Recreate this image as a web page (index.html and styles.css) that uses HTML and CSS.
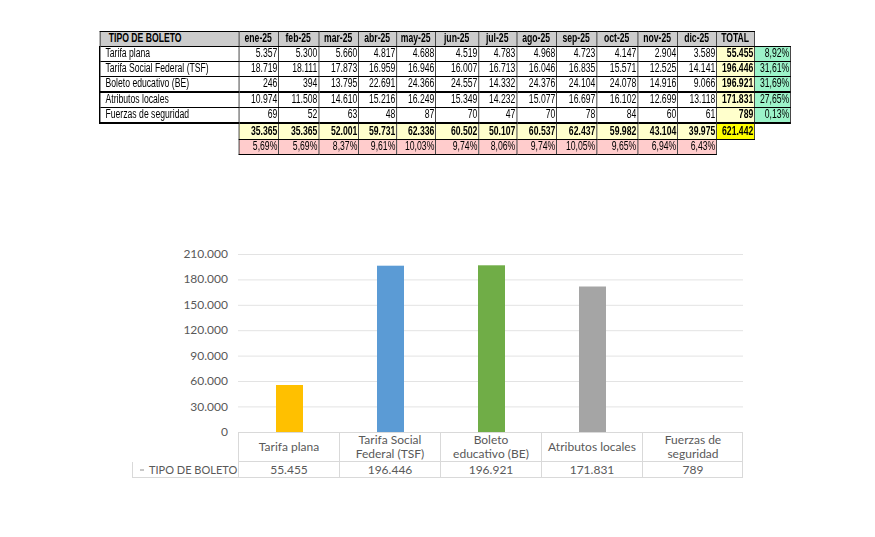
FILE: index.html
```html
<!DOCTYPE html>
<html lang="es">
<head>
<meta charset="utf-8">
<title>Tipo de boleto 2025</title>
<link rel="stylesheet" href="styles.css">
</head>
<body>
<div class="sheet">
  <table class="boletos">
    <colgroup>
      <col class="w139"><col class="w40"><col class="w40"><col class="w40"><col class="w38"><col class="w39"><col class="w43"><col class="w38"><col class="w40"><col class="w40"><col class="w41"><col class="w40"><col class="w39"><col class="w38"><col class="w36">
    </colgroup>
    <tr class="head">
      <th class="name">TIPO DE BOLETO</th>
      <th>ene-25</th><th>feb-25</th><th>mar-25</th><th>abr-25</th><th>may-25</th><th>jun-25</th><th>jul-25</th><th>ago-25</th><th>sep-25</th><th>oct-25</th><th>nov-25</th><th>dic-25</th><th>TOTAL</th><td class="blank"></td>
    </tr>
    <tr>
      <td class="name">Tarifa plana</td>
      <td>5.357</td><td>5.300</td><td>5.660</td><td>4.817</td><td>4.688</td><td>4.519</td><td>4.783</td><td>4.968</td><td>4.723</td><td>4.147</td><td>2.904</td><td>3.589</td><td class="tot">55.455</td><td class="share">8,92%</td>
    </tr>
    <tr>
      <td class="name">Tarifa Social Federal (TSF)</td>
      <td>18.719</td><td>18.111</td><td>17.873</td><td>16.959</td><td>16.946</td><td>16.007</td><td>16.713</td><td>16.046</td><td>16.835</td><td>15.571</td><td>12.525</td><td>14.141</td><td class="tot">196.446</td><td class="share">31,61%</td>
    </tr>
    <tr class="thick">
      <td class="name">Boleto educativo (BE)</td>
      <td>246</td><td>394</td><td>13.795</td><td>22.691</td><td>24.366</td><td>24.557</td><td>14.332</td><td>24.376</td><td>24.104</td><td>24.078</td><td>14.916</td><td>9.066</td><td class="tot">196.921</td><td class="share">31,69%</td>
    </tr>
    <tr>
      <td class="name">Atributos locales</td>
      <td>10.974</td><td>11.508</td><td>14.610</td><td>15.216</td><td>16.249</td><td>15.349</td><td>14.232</td><td>15.077</td><td>16.697</td><td>16.102</td><td>12.699</td><td>13.118</td><td class="tot">171.831</td><td class="share">27,65%</td>
    </tr>
    <tr class="thick">
      <td class="name">Fuerzas de seguridad</td>
      <td>69</td><td>52</td><td>63</td><td>48</td><td>87</td><td>70</td><td>47</td><td>70</td><td>78</td><td>84</td><td>60</td><td>61</td><td class="tot">789</td><td class="share">0,13%</td>
    </tr>
    <tr class="sums">
      <td class="blank"></td>
      <td>35.365</td><td>35.365</td><td>52.001</td><td>59.731</td><td>62.336</td><td>60.502</td><td>50.107</td><td>60.537</td><td>62.437</td><td>59.982</td><td>43.104</td><td>39.975</td><td class="grand">621.442</td><td class="blank"></td>
    </tr>
    <tr class="pcts">
      <td class="blank"></td>
      <td>5,69%</td><td>5,69%</td><td>8,37%</td><td>9,61%</td><td>10,03%</td><td>9,74%</td><td>8,06%</td><td>9,74%</td><td>10,05%</td><td>9,65%</td><td>6,94%</td><td>6,43%</td><td class="blank"></td><td class="blank"></td>
    </tr>
  </table>
</div>

<section class="chart">
  <div class="axis">
    <span>210.000</span><span>180.000</span><span>150.000</span><span>120.000</span><span>90.000</span><span>60.000</span><span>30.000</span><span>0</span>
  </div>
  <svg class="plot" width="505" height="178" viewBox="0 0 505 178">
    <g class="grid">
      <line x1="0" x2="505" y1="0.5" y2="0.5"/>
      <line x1="0" x2="505" y1="25.9" y2="25.9"/>
      <line x1="0" x2="505" y1="51.3" y2="51.3"/>
      <line x1="0" x2="505" y1="76.7" y2="76.7"/>
      <line x1="0" x2="505" y1="102.1" y2="102.1"/>
      <line x1="0" x2="505" y1="127.5" y2="127.5"/>
      <line x1="0" x2="505" y1="152.9" y2="152.9"/>
    </g>
    <rect class="b-plana" x="38" y="131" width="27" height="47"/>
    <rect class="b-tsf" x="139" y="11.7" width="27" height="166.3"/>
    <rect class="b-be" x="240" y="11.3" width="27" height="166.7"/>
    <rect class="b-loc" x="341" y="32.5" width="27" height="145.5"/>
  </svg>
  <div class="gap"></div>
  <div class="cats">
    <div class="cell">Tarifa plana</div>
    <div class="cell">Tarifa Social<br>Federal (TSF)</div>
    <div class="cell">Boleto<br>educativo (BE)</div>
    <div class="cell">Atributos locales</div>
    <div class="cell">Fuerzas de<br>seguridad</div>
  </div>
  <div class="legend"><span class="key"></span>TIPO DE BOLETO</div>
  <div class="vals">
    <div class="cell">55.455</div>
    <div class="cell">196.446</div>
    <div class="cell">196.921</div>
    <div class="cell">171.831</div>
    <div class="cell">789</div>
  </div>
</section>
</body>
</html>
```

FILE: styles.css
```css
html, body {
  margin: 0;
  background: #ffffff;
}

body {
  width: 875px;
  height: 537px;
  overflow: hidden;
}

.sheet {
  padding: 31px 0 0 99px;
  height: 122px;
}

/* the sheet font is a narrow sans: Liberation Sans squeezed to 72% width */
.boletos {
  border-collapse: collapse;
  table-layout: fixed;
  width: 959.72px;
  transform: scaleX(0.72);
  transform-origin: 0 0;
  font-family: "Liberation Sans", Arial, sans-serif;
  font-size: 12px;
  color: #000;
}

.w139 { width: 193.06px; }
.w43 { width: 59.72px; }
.w41 { width: 56.94px; }
.w40 { width: 55.56px; }
.w39 { width: 54.17px; }
.w38 { width: 52.78px; }
.w36 { width: 50px; }

.boletos th,
.boletos td {
  border-style: solid;
  border-color: #000;
  border-width: 1px 1.39px;
  padding: 0 1.4px 0 0;
  height: 14px;
  line-height: 13px;
  text-align: right;
  white-space: nowrap;
  overflow: hidden;
}

.boletos .head th {
  background: #cccccc;
  font-weight: bold;
  text-align: center;
  height: 13px;
}

.boletos .head th.name {
  text-align: left;
  padding-left: 12px;
}

.boletos td.name {
  text-align: left;
  padding-left: 7px;
  border-left-width: 2.78px;
}

.boletos .thick td {
  border-bottom-width: 2px;
}

.boletos td.blank {
  border: none;
  background: transparent;
}

.boletos .tot {
  background: #ffffcc;
  font-weight: bold;
}

.boletos .share {
  background: #9cf3c9;
}

.boletos .sums td {
  background: #ffffcc;
  font-weight: bold;
  height: 15px;
}

.boletos .sums td.grand {
  background: #ffff00;
}

.boletos .pcts td {
  background: #ffcccc;
  height: 14px;
}

.boletos .sums td.blank,
.boletos .pcts td.blank {
  background: transparent;
  border: none;
}

/* chart */
.chart {
  display: grid;
  grid-template-columns: 106px 505px;
  grid-template-rows: 178px 30px 16px;
  margin: 101px 0 0 132px;
  font-family: "Lato", "Open Sans", sans-serif;
  font-size: 12px;
  color: #595959;
}

.axis {
  grid-column: 1;
  grid-row: 1;
  margin: -8px 0;
  padding-right: 10px;
  display: flex;
  flex-direction: column;
  justify-content: space-between;
  align-items: flex-end;
}

.axis span {
  line-height: 16px;
  height: 16px;
}

.plot {
  grid-column: 2;
  grid-row: 1;
  display: block;
}

.grid line {
  stroke: #e3e3e3;
  stroke-width: 1;
}

.b-plana { fill: #ffc000; }
.b-tsf { fill: #5b9bd5; }
.b-be { fill: #70ad47; }
.b-loc { fill: #a5a5a5; }

.gap {
  grid-column: 1;
  grid-row: 2;
}

.cats,
.vals {
  display: grid;
  grid-template-columns: repeat(5, 101px);
  border-right: 1px solid #d9d9d9;
}

.cats {
  grid-column: 2;
  grid-row: 2;
  border-top: 1px solid #d9d9d9;
  border-bottom: 1px solid #d9d9d9;
}

.vals {
  grid-column: 2;
  grid-row: 3;
  border-bottom: 1px solid #d9d9d9;
}

.cell {
  border-left: 1px solid #d9d9d9;
  display: flex;
  align-items: center;
  justify-content: center;
  text-align: center;
  line-height: 14px;
}

.legend {
  grid-column: 1;
  grid-row: 3;
  border: 1px solid #d9d9d9;
  border-top: none;
  border-right: none;
  display: flex;
  align-items: center;
  padding-left: 7px;
  gap: 5px;
  font-size: 11px;
  line-height: 14px;
  white-space: nowrap;
}

.key {
  width: 4px;
  height: 2px;
  background: #c8c8c8;
}
```
